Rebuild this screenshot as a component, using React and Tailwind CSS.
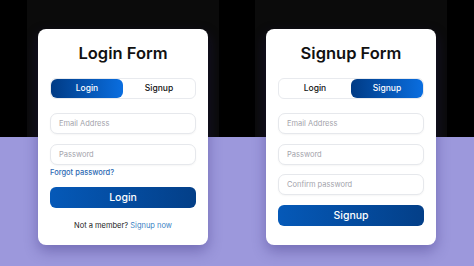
import React from "react";

const font = { fontFamily: "Inter, 'Noto Sans', sans-serif" };

function Toggle({ active }) {
  return (
    <div className="flex h-[21px] w-full rounded-[6px] border border-[#e8eaee] bg-white">
      <div
        className={
          "flex flex-1 items-center justify-center rounded-[6px] text-[8.5px] font-medium " +
          (active === "login"
            ? "bg-[linear-gradient(to_right,#003b85,#0a6ee0)] text-white"
            : "text-[#111]")
        }
      >
        Login
      </div>
      <div
        className={
          "flex flex-1 items-center justify-center rounded-[6px] text-[8.5px] font-medium " +
          (active === "signup"
            ? "bg-[linear-gradient(to_right,#003b85,#0a6ee0)] text-white"
            : "text-[#111]")
        }
      >
        Signup
      </div>
    </div>
  );
}

function Field({ label, className = "" }) {
  return (
    <div
      className={
        "flex h-[21px] w-full items-center rounded-[7px] border border-[#e6e8ec] bg-white px-[8px] text-[7.5px] text-[#a3a3ab] shadow-[0_1px_2px_rgba(0,0,0,0.04)] " +
        className
      }
    >
      {label}
    </div>
  );
}

function Button({ label, className = "" }) {
  return (
    <div
      className={
        "flex h-[21px] w-full items-center justify-center rounded-[6px] bg-[linear-gradient(to_right,#0559b8,#033f88)] text-[10.5px] font-medium text-white " +
        className
      }
    >
      {label}
    </div>
  );
}

function Card({ children }) {
  return (
    <div className="flex h-[216px] w-[170px] flex-col rounded-[8px] bg-white px-[12px] pt-[14px] shadow-[0_6px_14px_rgba(40,30,110,0.35)]">
      {children}
    </div>
  );
}

export default function App() {
  return (
    <div
      className="flex h-[266px] w-[474px] gap-[36px] bg-[linear-gradient(to_bottom,#000_137px,#9c98dc_137px)] px-[27px]"
      style={font}
    >
      <div className="flex h-full w-[192px] justify-center bg-[linear-gradient(to_bottom,#0b0b0b_137px,#9c98dc_137px)] pt-[29px]">
        <Card>
          <h1 className="text-center text-[16.5px] font-semibold leading-[20px] text-[#111]">
            Login Form
          </h1>
          <div className="mt-[15px]">
            <Toggle active="login" />
          </div>
          <Field label="Email Address" className="mt-[14px]" />
          <Field label="Password" className="mt-[10px]" />
          <div className="mt-[3px] text-[7.5px] font-medium leading-[10px] text-[#2d6ab3]">
            Forgot password?
          </div>
          <Button label="Login" className="mt-[9px]" />
          <div className="mt-[13px] text-center text-[7.5px] leading-[10px] text-[#222]">
            Not a member? <span className="text-[#3a7fc4]">Signup now</span>
          </div>
        </Card>
      </div>
      <div className="flex h-full w-[192px] justify-center bg-[linear-gradient(to_bottom,#0b0b0b_137px,#9c98dc_137px)] pt-[29px]">
        <Card>
          <h1 className="text-center text-[16.5px] font-semibold leading-[20px] text-[#111]">
            Signup Form
          </h1>
          <div className="mt-[15px]">
            <Toggle active="signup" />
          </div>
          <Field label="Email Address" className="mt-[14px]" />
          <Field label="Password" className="mt-[10px]" />
          <Field label="Confirm password" className="mt-[9px]" />
          <Button label="Signup" className="mt-[10px]" />
        </Card>
      </div>
    </div>
  );
}
